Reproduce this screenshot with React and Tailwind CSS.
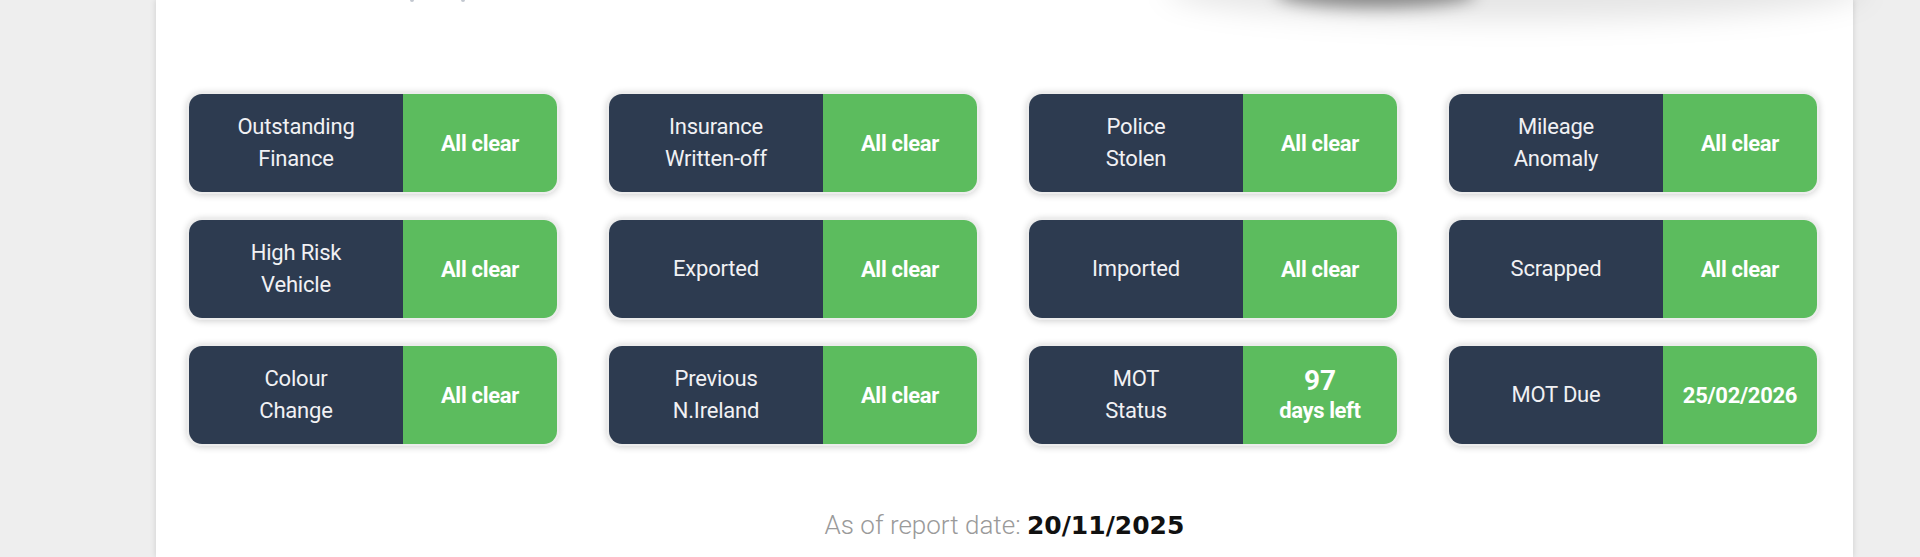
import React from "react";

const cards = [
  { label: ["Outstanding", "Finance"], value: "All clear" },
  { label: ["Insurance", "Written-off"], value: "All clear" },
  { label: ["Police", "Stolen"], value: "All clear" },
  { label: ["Mileage", "Anomaly"], value: "All clear" },
  { label: ["High Risk", "Vehicle"], value: "All clear" },
  { label: ["Exported"], value: "All clear" },
  { label: ["Imported"], value: "All clear" },
  { label: ["Scrapped"], value: "All clear" },
  { label: ["Colour", "Change"], value: "All clear" },
  { label: ["Previous", "N.Ireland"], value: "All clear" },
  { label: ["MOT", "Status"], value: "mot" },
  { label: ["MOT Due"], value: "date" },
];

function Card({ label, value }) {
  return (
    <div className="flex h-[102px] overflow-hidden rounded-[15px] border-2 border-[#ececec] shadow-[0_1px_7px_rgba(0,0,0,0.2)]">
      <div className="flex w-[214px] flex-col items-center justify-center bg-[#2d3b50] text-[22px] leading-[32px] tracking-[-0.2px] text-[#f1f1f4]">
        {label.map((l) => (
          <span key={l}>{l}</span>
        ))}
      </div>
      <div className="flex flex-1 flex-col items-center justify-center bg-[#5cbc5e] font-bold text-white">
        {value === "mot" ? (
          <>
            <span className="text-[28px] leading-[32px]">97</span>
            <span className="text-[22px] leading-[28px] tracking-[-0.4px]">days left</span>
          </>
        ) : value === "date" ? (
          <span className="text-[22px] tracking-[-0.3px]">25/02/2026</span>
        ) : (
          <span className="text-[22px] tracking-[-0.3px]">{value}</span>
        )}
      </div>
    </div>
  );
}

export default function App() {
  return (
    <div className="h-[557px] overflow-hidden bg-[#eeeeee] font-['Roboto',sans-serif]">
      <div className="relative ml-[156px] h-full w-[1697px] bg-white shadow-[0_0_6px_rgba(0,0,0,0.14)]">
        <div className="pointer-events-none absolute left-[1010px] top-[-40px] h-[60px] w-[700px] rounded-[50%] bg-black/10 blur-[14px]" />
        <div className="pointer-events-none absolute left-[1120px] top-[-22px] h-[30px] w-[200px] rounded-[50%] bg-black/40 blur-[8px]" />
        <div className="pointer-events-none absolute left-[254px] top-[-2px] h-[4px] w-[4px] rounded-full bg-gray-400/60" />
        <div className="pointer-events-none absolute left-[305px] top-[-2px] h-[4px] w-[4px] rounded-full bg-gray-400/60" />

        <div className="grid grid-cols-[repeat(4,372px)] gap-x-[48px] gap-y-[24px] pl-[31px] pt-[92px]">
          {cards.map((c, i) => (
            <Card key={i} {...c} />
          ))}
        </div>

        <div className="mt-[60px] flex items-baseline justify-center">
          <span className="text-[26px] font-light text-[#9a9a9a]">As of report date:&nbsp;</span>
          <span className="font-['DejaVu_Sans',sans-serif] text-[25px] font-bold text-[#111111]">
            20/11/2025
          </span>
        </div>
      </div>
    </div>
  );
}
